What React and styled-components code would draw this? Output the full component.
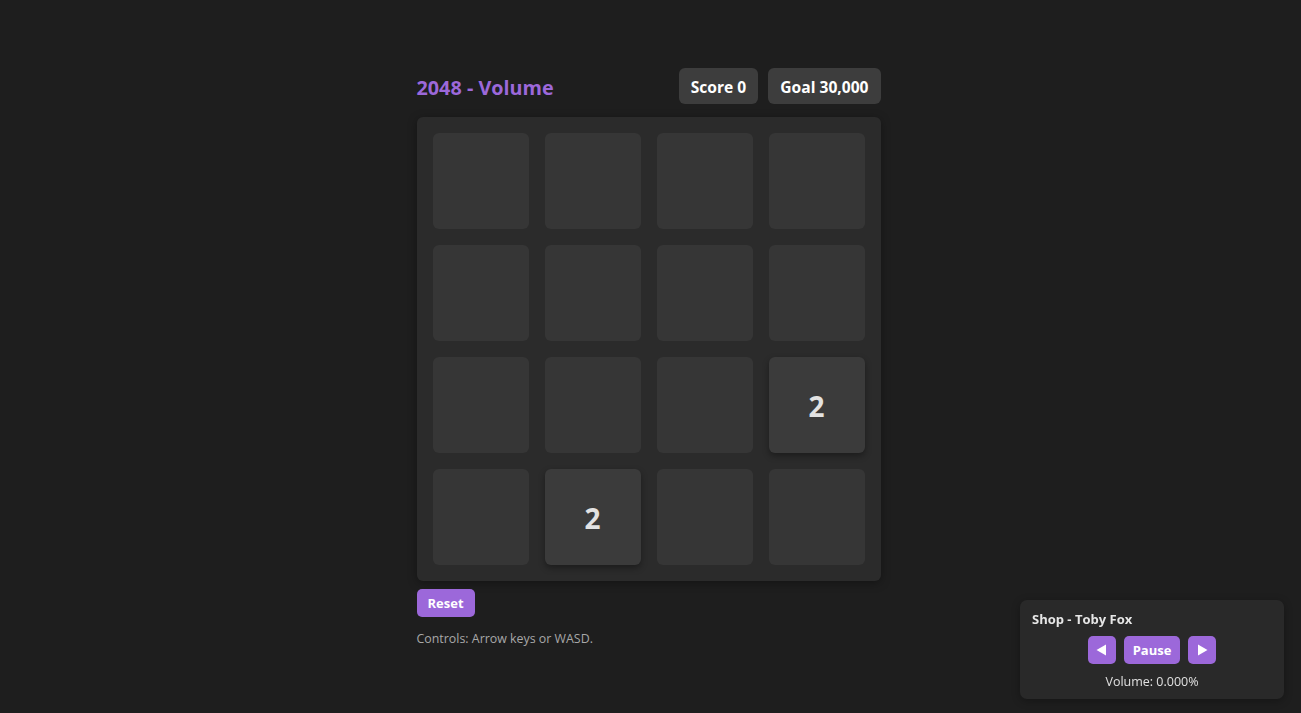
import React, { useState } from 'react';
import styled, { createGlobalStyle } from 'styled-components';

const GlobalStyle = createGlobalStyle`
  html, body {
    margin: 0;
    padding: 0;
    background: #1e1e1e;
    color: #e6e6e6;
    font-family: "Open Sans", "Noto Sans", "Liberation Sans", sans-serif;
  }
`;

const Page = styled.div`
  min-height: 100vh;
  padding: 68px 4px 0 0;
  box-sizing: border-box;
`;

const Game = styled.main`
  width: 464px;
  margin: 0 auto;
`;

const Header = styled.header`
  display: flex;
  align-items: center;
  justify-content: space-between;
  margin-bottom: 13px;
`;

const Title = styled.h1`
  margin: 0;
  font-size: 19.8px;
  font-weight: 700;
  color: #9c68da;
  padding-top: 3px;
`;

const Stats = styled.div`
  display: flex;
  gap: 10px;
`;

const Stat = styled.div`
  height: 36px;
  padding: 2px 12px 0;
  box-sizing: border-box;
  display: flex;
  align-items: center;
  background: #3d3d3d;
  border-radius: 6px;
  color: #fff;
  font-weight: 700;
  font-size: 15.6px;
`;

const Board = styled.div`
  display: grid;
  grid-template-columns: repeat(4, 96px);
  grid-auto-rows: 96px;
  gap: 16px;
  padding: 16px;
  background: #2b2b2b;
  border-radius: 6px;
  box-shadow: 0 2px 10px rgba(0, 0, 0, 0.35);
`;

const Tile = styled.div`
  border-radius: 6px;
  background: ${p => (p.$value ? '#3b3b3b' : '#363636')};
  box-shadow: ${p => (p.$value ? '0 3px 6px rgba(0,0,0,0.35)' : 'none')};
  display: flex;
  align-items: center;
  justify-content: center;
  font-size: 28px;
  font-weight: 700;
  color: #e2e2e2;
  padding-top: 2px;
  box-sizing: border-box;
`;

const Reset = styled.button`
  margin-top: 8px;
  height: 28px;
  padding: 0 11px;
  border: none;
  border-radius: 5px;
  background: #9c68da;
  color: #fff;
  font-family: inherit;
  font-weight: 700;
  font-size: 13px;
  cursor: pointer;
`;

const Help = styled.p`
  margin: 13px 0 0;
  font-size: 12.4px;
  color: #a8a8a8;
`;

const Player = styled.aside`
  position: fixed;
  right: 17px;
  bottom: 14px;
  width: 264px;
  box-sizing: border-box;
  padding: 10px 12px 9px;
  background: #292929;
  border-radius: 7px;
  box-shadow: 0 2px 8px rgba(0, 0, 0, 0.3);
`;

const Track = styled.div`
  font-size: 13px;
  font-weight: 700;
  color: #e6e6e6;
`;

const Controls = styled.div`
  display: flex;
  justify-content: center;
  gap: 8px;
  margin-top: 8px;
`;

const Ctrl = styled.button`
  height: 28px;
  min-width: 28px;
  padding: ${p => (p.$wide ? '0 9px' : '0')};
  border: none;
  border-radius: 5px;
  background: #9c68da;
  color: #fff;
  font-family: inherit;
  font-weight: 700;
  font-size: 13px;
  display: flex;
  align-items: center;
  justify-content: center;
  cursor: pointer;
`;

const Volume = styled.div`
  margin-top: 9px;
  text-align: center;
  font-size: 12.5px;
  color: #e0e0e0;
`;

const Tri = ({ dir }) => (
  <svg width="11" height="12" viewBox="0 0 11 12">
    {dir === 'left'
      ? <path d="M10 0.5 L10 11.5 L0.5 6 Z" fill="#fff" />
      : <path d="M1 0.5 L1 11.5 L10.5 6 Z" fill="#fff" />}
  </svg>
);

const START = [0, 0, 0, 0, 0, 0, 0, 0, 0, 0, 0, 2, 0, 2, 0, 0];

const App = () => {
  const [cells, setCells] = useState(START);
  const [paused, setPaused] = useState(false);

  return (
    <>
      <GlobalStyle />
      <Page>
        <Game>
          <Header>
            <Title>2048 - Volume</Title>
            <Stats>
              <Stat>Score 0</Stat>
              <Stat>Goal 30,000</Stat>
            </Stats>
          </Header>
          <Board>
            {cells.map((v, i) => (
              <Tile key={i} $value={v}>{v || ''}</Tile>
            ))}
          </Board>
          <Reset onClick={() => setCells(START)}>Reset</Reset>
          <Help>Controls: Arrow keys or WASD.</Help>
        </Game>
      </Page>
      <Player>
        <Track>Shop - Toby Fox</Track>
        <Controls>
          <Ctrl><Tri dir="left" /></Ctrl>
          <Ctrl $wide onClick={() => setPaused(!paused)}>{paused ? 'Play' : 'Pause'}</Ctrl>
          <Ctrl><Tri dir="right" /></Ctrl>
        </Controls>
        <Volume>Volume: 0.000%</Volume>
      </Player>
    </>
  );
};

export default App;
